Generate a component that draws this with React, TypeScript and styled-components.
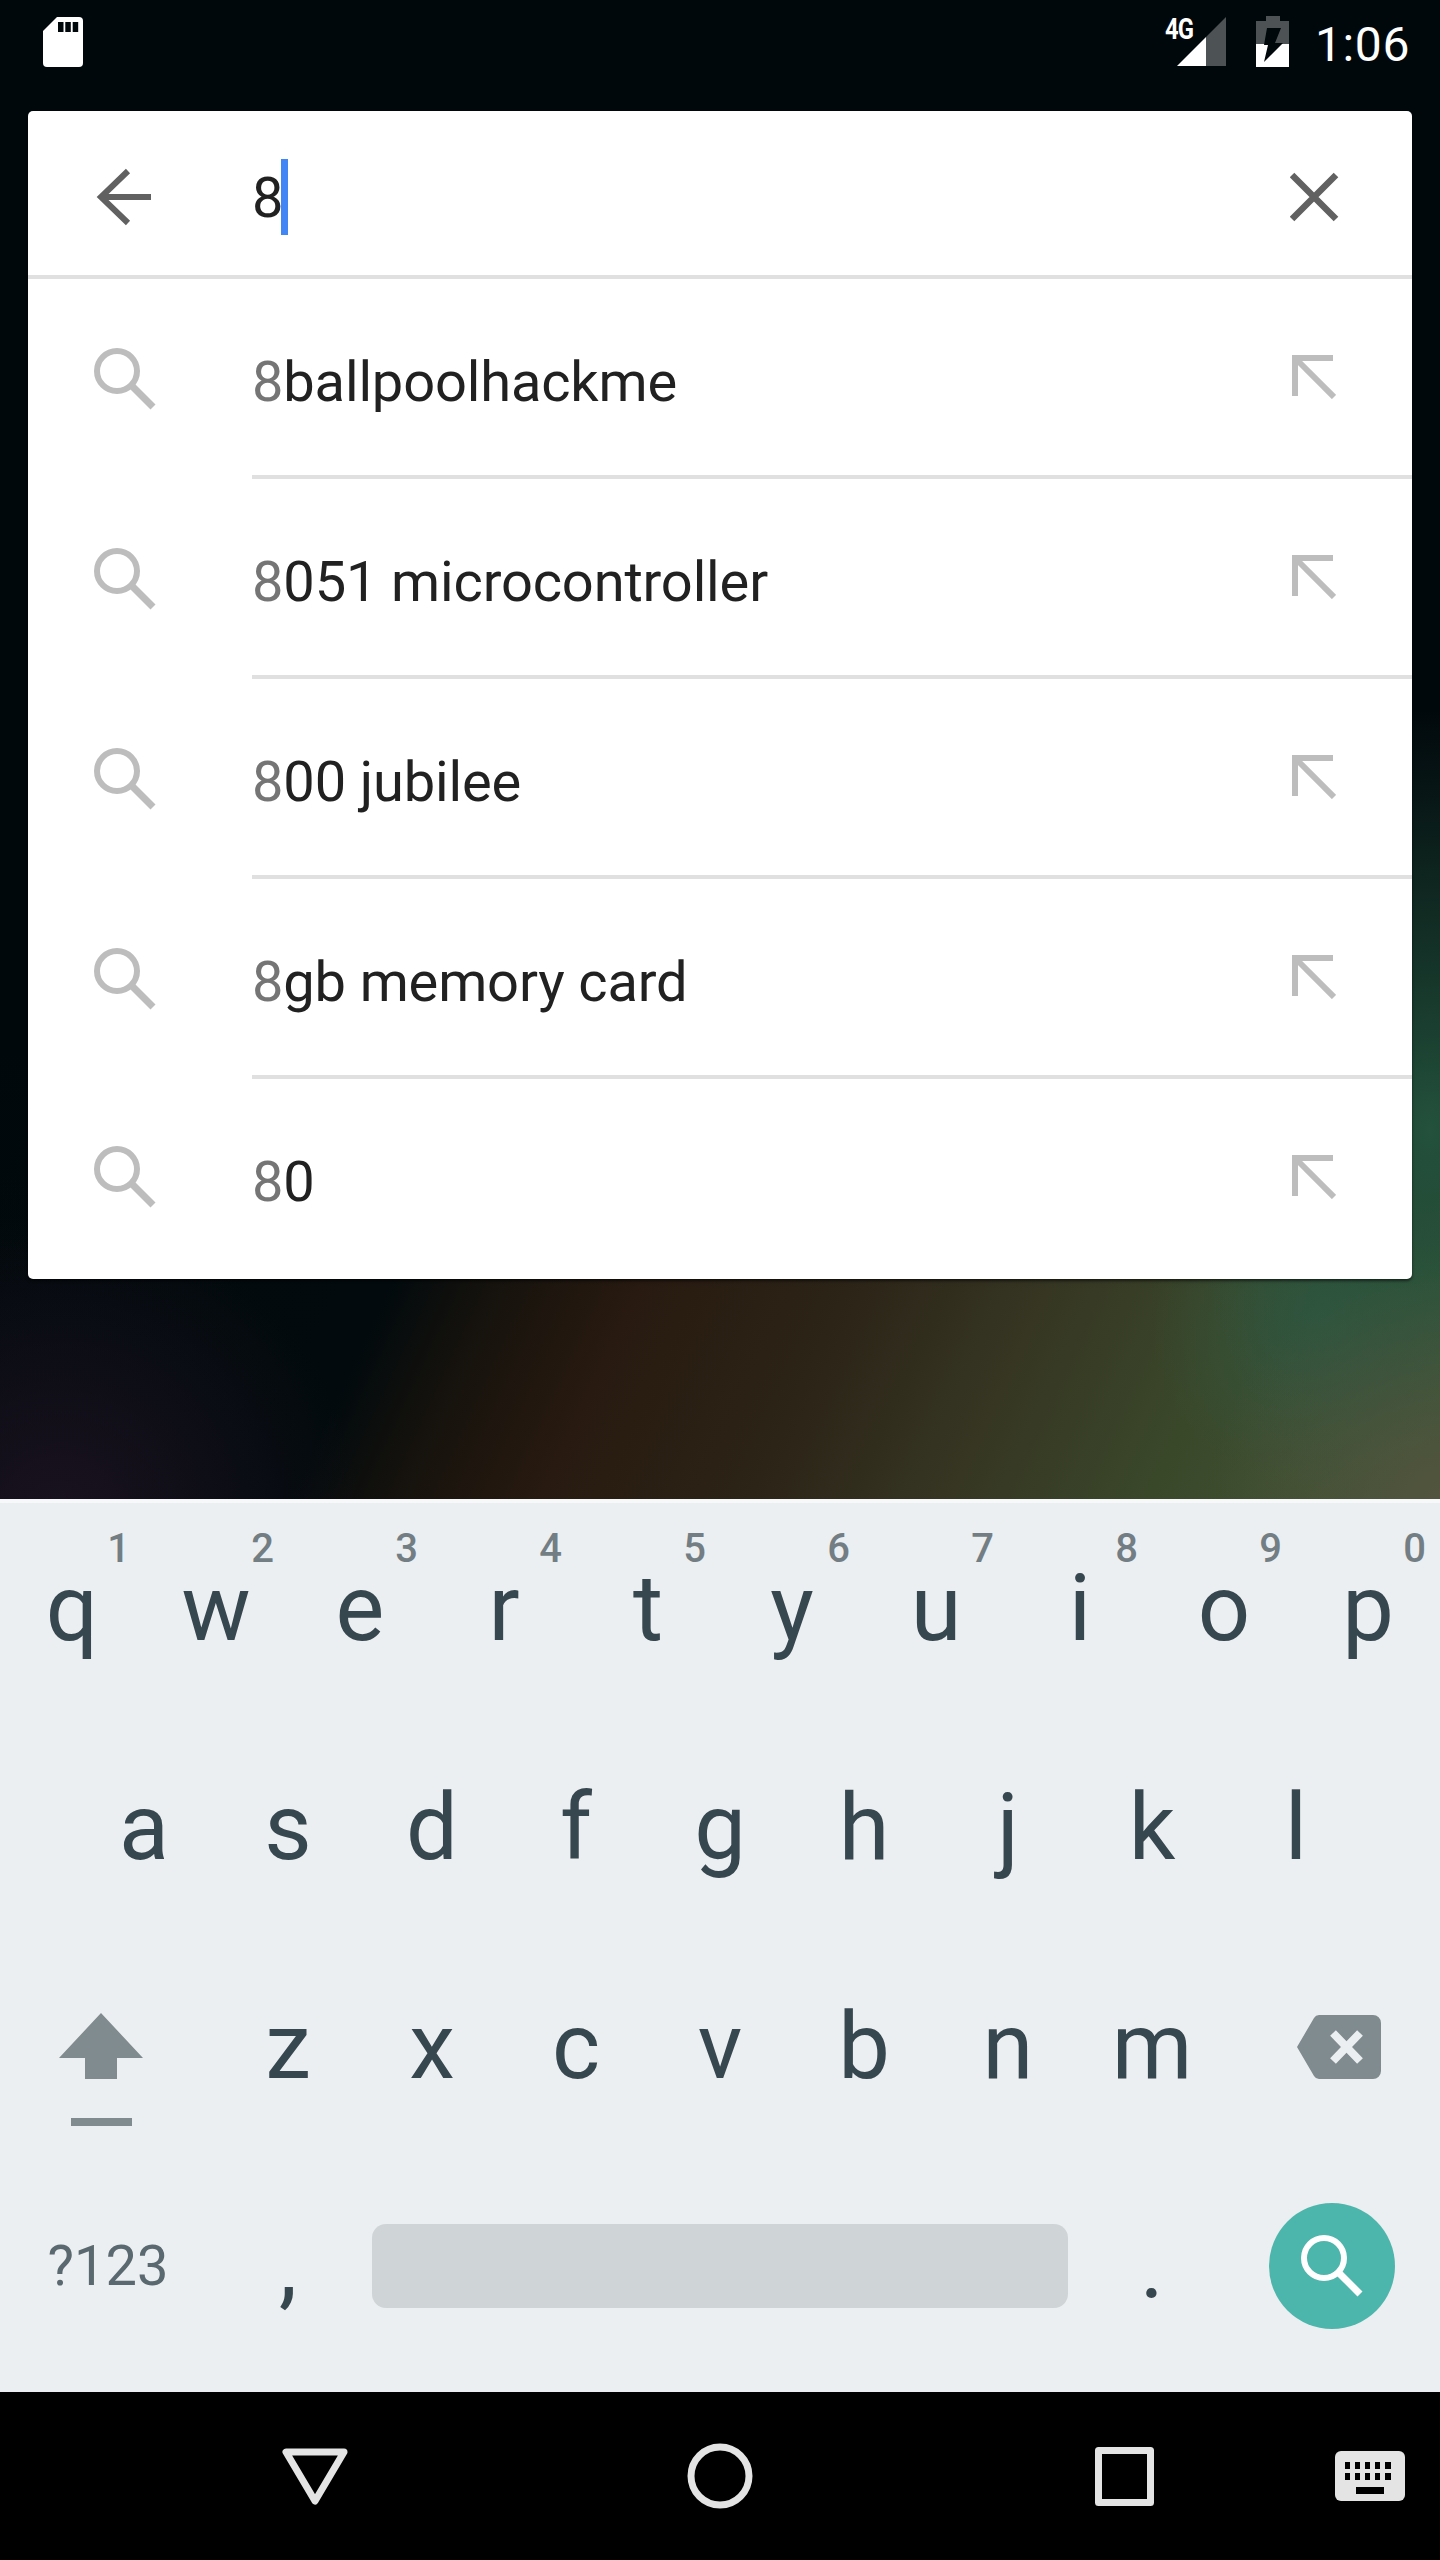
import React from "react";
import styled, { createGlobalStyle } from "styled-components";

const GlobalStyle = createGlobalStyle`
  html, body {
    margin: 0;
    padding: 0;
    background: #000;
  }
  * {
    box-sizing: border-box;
  }
`;

const Screen = styled.div`
  width: 1440px;
  height: 2560px;
  display: flex;
  flex-direction: column;
  overflow: hidden;
  font-family: Roboto, "Liberation Sans", sans-serif;
`;

// wallpaper, only its lower part is visible below the card
const Wallpaper = styled.div`
  height: 1499px;
  padding: 0 28px;
  display: flex;
  flex-direction: column;
  background:
    radial-gradient(circle 230px at 1440px 1499px, rgba(84, 84, 62, 0.95), rgba(84, 84, 62, 0)),
    radial-gradient(ellipse 240px 420px at 1430px 1130px, rgba(36, 84, 62, 0.95), rgba(36, 84, 62, 0)),
    linear-gradient(to bottom, #01080c 0, #01080c 1050px, rgba(1, 8, 12, 0) 1290px),
    radial-gradient(circle 170px at 1320px 1320px, rgba(48, 88, 68, 0.75), rgba(48, 88, 68, 0)),
    radial-gradient(circle 300px at 60px 1520px, rgba(32, 20, 36, 0.8), rgba(32, 20, 36, 0)),
    linear-gradient(
      115deg,
      #03090e 0,
      #020a0d 896px,
      #15120d 987px,
      #281a10 1123px,
      #2c2417 1313px,
      #363623 1494px,
      #3a482a 1675px,
      #3e5434 1893px
    );
`;

const StatusBar = styled.div`
  height: 111px;
  margin: 0 -28px;
  padding: 0 30px 0 43px;
  display: flex;
  justify-content: space-between;
  color: #fff;
`;

const StatusLeft = styled.div`
  padding-top: 17px;
`;

const StatusRight = styled.div`
  display: flex;
  align-items: flex-start;
`;

const SignalWrap = styled.div`
  width: 62px;
  height: 50px;
  margin-top: 17px;
  position: relative;
`;

const NetworkLabel = styled.span`
  position: absolute;
  left: 0;
  top: -2px;
  font-size: 29px;
  line-height: 29px;
  font-weight: 700;
  letter-spacing: -1px;
  transform: scaleX(0.82);
  transform-origin: left top;
`;

const SignalBars = styled.svg`
  position: absolute;
  left: 12px;
  top: 0;
`;

const BatteryWrap = styled.div`
  margin: 16px 0 0 29px;
`;

const Clock = styled.div`
  margin: 19px 0 0 26px;
  font-size: 48px;
  line-height: 52px;
  letter-spacing: 0.6px;
`;

const Card = styled.div`
  height: 1168px;
  background: #fff;
  border-radius: 5px;
  box-shadow: 0 2px 3px rgba(0, 0, 0, 0.55);
  display: flex;
  flex-direction: column;
`;

const SearchHeader = styled.div`
  height: 168px;
  padding-top: 7px;
  display: flex;
  align-items: center;
  border-bottom: 4px solid #e0e0e0;
  flex: none;
`;

const IconSlot = styled.div`
  width: 224px;
  flex: none;
  padding-left: 66px;
  display: flex;
  align-items: center;
`;

const QueryText = styled.div`
  flex: 1;
  display: flex;
  align-items: center;
  font-size: 56px;
  letter-spacing: -0.15px;
  color: #212121;
`;

const QueryValue = styled.span`
  padding-top: 3px;
`;

const Caret = styled.span`
  width: 7px;
  height: 76px;
  margin-left: -2px;
  background: #4285f4;
`;

const TrailingSlot = styled.div`
  width: 122px;
  flex: none;
  display: flex;
  align-items: center;
`;

const Suggestions = styled.div`
  flex: 1;
  display: flex;
  flex-direction: column;
`;

const Row = styled.div`
  height: 200px;
  display: flex;
  align-items: stretch;
  &:last-child {
    height: 196px;
  }
`;

const RowBody = styled.div<{ $last: boolean }>`
  flex: 1;
  display: flex;
  align-items: center;
  border-bottom: ${(p) => (p.$last ? "none" : "4px solid #e0e0e0")};
`;

const RowText = styled.div`
  flex: 1;
  padding-top: 9px;
  font-size: 56px;
  letter-spacing: -0.15px;
  color: #212121;
  white-space: pre;
`;

const Typed = styled.span`
  color: #757575;
`;

const Keyboard = styled.div`
  height: 893px;
  background: #eceff1;
  border-top: 4px solid #f7f8f9;
  display: flex;
  flex-direction: column;
`;

const KeyRow = styled.div<{ $inset?: number }>`
  height: 219px;
  flex: none;
  padding-left: ${(p) => p.$inset ?? 0}px;
  display: flex;
  align-items: center;
  &:first-child {
    margin-top: -4px;
  }
`;

const Key = styled.div<{ $width?: number }>`
  width: ${(p) => p.$width ?? 144}px;
  height: 100%;
  flex: none;
  position: relative;
  display: flex;
  align-items: center;
  justify-content: center;
  font-size: 92px;
  color: #37474f;
`;

const Hint = styled.span`
  position: absolute;
  top: 26px;
  right: 14px;
  font-size: 40px;
  line-height: 48px;
  font-weight: 500;
  color: #727e84;
`;

const ShiftKey = styled(Key)`
  padding: 46px 14px 0 0;
`;

const DeleteKey = styled(Key)`
  padding-left: 14px;
`;

const ModeKey = styled(Key)`
  font-size: 56px;
  color: #5a686f;
`;

const SpaceBar = styled.div`
  width: 696px;
  height: 84px;
  flex: none;
  border-radius: 14px;
  background: #cfd4d7;
`;

const EnterButton = styled.div`
  width: 126px;
  height: 126px;
  border-radius: 50%;
  background: #4db6ac;
  display: flex;
  align-items: center;
  justify-content: center;
`;

const NavBar = styled.div`
  height: 168px;
  background: #000;
  display: grid;
  grid-template-columns: repeat(3, 405px) 1fr;
  padding: 0 35px 0 112px;
  align-items: center;
  justify-items: center;
`;

const ImeSwitch = styled.div`
  justify-self: end;
  display: flex;
`;

const Glyph = styled.svg`
  display: block;
  flex: none;
`;

const suggestions = ["ballpoolhackme", "051 microcontroller", "00 jubilee", "gb memory card", "0"];

const SearchIcon = ({ color = "#bdbdbd" }: { color?: string }) => (
  <Glyph width="62" height="62" viewBox="0 0 62 62" fill="none" stroke={color}>
    <circle cx="23" cy="23" r="20" strokeWidth="6" />
    <path d="M38 38 L59 59" strokeWidth="7" />
  </Glyph>
);

const FillIcon = () => (
  <Glyph width="46" height="44" viewBox="0 0 46 44" fill="none" stroke="#bdbdbd">
    <path d="M44 42 L8 6" strokeWidth="6" />
    <path d="M5 41 V3 H43" strokeWidth="6" />
  </Glyph>
);

const SdCard = () => (
  <Glyph width="40" height="50" viewBox="0 0 40 50">
    <path d="M14 0 H36 a4 4 0 0 1 4 4 V46 a4 4 0 0 1 -4 4 H4 a4 4 0 0 1 -4 -4 V14 Z" fill="#fff" />
    <path d="M15 5 h5.500 v10 h-5.500 Z M22.300 5 h5.500 v10 h-5.500 Z M29.700 5 h5.500 v10 h-5.500 Z" fill="#01080c" />
  </Glyph>
);

const Signal = () => (
  <SignalBars width="49" height="49" viewBox="0 0 49 49">
    <path d="M49 0 V49 H29 V20 Z" fill="#4d5355" />
    <path d="M29 20 V49 H0 Z" fill="#fff" />
  </SignalBars>
);

const Battery = () => (
  <Glyph width="33" height="51" viewBox="0 0 33 51">
    <path d="M10 0 H24 V5 H33 V28 H0 V5 H10 Z" fill="#4d5355" />
    <path d="M0 28 H33 V51 H0 Z" fill="#fff" />
    <path d="M11 12 H25 L19 27 H27 L8 46 L12 29 H8 Z" fill="#01080c" />
  </Glyph>
);

export default function App() {
  return (
    <Screen>
      <GlobalStyle />
      <Wallpaper>
        <StatusBar>
          <StatusLeft>
            <SdCard />
          </StatusLeft>
          <StatusRight>
            <SignalWrap>
              <NetworkLabel>4G</NetworkLabel>
              <Signal />
            </SignalWrap>
            <BatteryWrap>
              <Battery />
            </BatteryWrap>
            <Clock>1:06</Clock>
          </StatusRight>
        </StatusBar>
        <Card>
          <SearchHeader>
            <IconSlot>
              <Glyph width="58" height="58" viewBox="-2 0 58 58" fill="none" stroke="#616161" strokeWidth="6">
                <path d="M55 29 H6" />
                <path d="M32 3 L5 29 L32 55" />
              </Glyph>
            </IconSlot>
            <QueryText>
              <QueryValue>8</QueryValue>
              <Caret />
            </QueryText>
            <TrailingSlot>
              <Glyph width="50" height="50" viewBox="1 0 50 50" fill="none" stroke="#616161" strokeWidth="6.500">
                <path d="M3 3 L47 47 M47 3 L3 47" />
              </Glyph>
            </TrailingSlot>
          </SearchHeader>
          <Suggestions>
            {suggestions.map((s, i) => (
              <Row key={s}>
                <IconSlot>
                  <SearchIcon />
                </IconSlot>
                <RowBody $last={i === suggestions.length - 1}>
                  <RowText>
                    <Typed>8</Typed>
                    {s}
                  </RowText>
                  <TrailingSlot>
                    <FillIcon />
                  </TrailingSlot>
                </RowBody>
              </Row>
            ))}
          </Suggestions>
        </Card>
      </Wallpaper>
      <Keyboard>
        <KeyRow>
          {"qwertyuiop".split("").map((k, i) => (
            <Key key={k}>
              {k}
              <Hint>{(i + 1) % 10}</Hint>
            </Key>
          ))}
        </KeyRow>
        <KeyRow $inset={72}>
          {"asdfghjkl".split("").map((k) => (
            <Key key={k}>{k}</Key>
          ))}
        </KeyRow>
        <KeyRow>
          <ShiftKey $width={216}>
            <Glyph width="84" height="113" viewBox="0 0 84 113" fill="#7f8b8e">
              <path d="M42 0 L84 45 H58 V66 H26 V45 H0 Z" />
              <rect x="12" y="105" width="61" height="8" />
            </Glyph>
          </ShiftKey>
          {"zxcvbnm".split("").map((k) => (
            <Key key={k}>{k}</Key>
          ))}
          <DeleteKey $width={216}>
            <Glyph width="84" height="64" viewBox="0 0 84 64">
              <path
                d="M22 0 H76 a8 8 0 0 1 8 8 V56 a8 8 0 0 1 -8 8 H22 a6 6 0 0 1 -5 -3 L0 32 L17 3 a6 6 0 0 1 5 -3 Z"
                fill="#7f8b8e"
              />
              <path d="M36 18 L63 46 M63 18 L36 46" stroke="#eceff1" strokeWidth="8" />
            </Glyph>
          </DeleteKey>
        </KeyRow>
        <KeyRow>
          <ModeKey $width={216}>?123</ModeKey>
          <Key>,</Key>
          <Key $width={12} />
          <SpaceBar />
          <Key $width={12} />
          <Key>.</Key>
          <Key $width={216}>
            <EnterButton>
              <SearchIcon color="#fff" />
            </EnterButton>
          </Key>
        </KeyRow>
      </Keyboard>
      <NavBar>
        <Glyph width="66" height="57" viewBox="0 0 66 57" fill="none" stroke="#e4e4e4" strokeWidth="7" strokeLinejoin="round">
          <path d="M4 4 H62 L33 53 Z" />
        </Glyph>
        <Glyph width="66" height="66" viewBox="0 0 66 66" fill="none" stroke="#e4e4e4" strokeWidth="7">
          <circle cx="33" cy="33" r="29" />
        </Glyph>
        <Glyph width="59" height="59" viewBox="0 0 59 59" fill="none" stroke="#e4e4e4" strokeWidth="7" strokeLinejoin="round">
          <rect x="3.500" y="3.500" width="52" height="52" />
        </Glyph>
        <ImeSwitch>
          <Glyph width="70" height="50" viewBox="0 0 70 50">
            <rect width="70" height="50" rx="6" fill="#e4e4e4" />
            <path
              d="M10 11 h5 v7 h-5 Z M20 11 h5 v7 h-5 Z M30 11 h5 v7 h-5 Z M40 11 h5 v7 h-5 Z M50 11 h6 v7 h-6 Z M10 22 h5 v7 h-5 Z M20 22 h5 v7 h-5 Z M30 22 h5 v7 h-5 Z M40 22 h5 v7 h-5 Z M50 22 h6 v7 h-6 Z M21 36 h28 v7 h-28 Z"
              fill="#000"
            />
          </Glyph>
        </ImeSwitch>
      </NavBar>
    </Screen>
  );
}
